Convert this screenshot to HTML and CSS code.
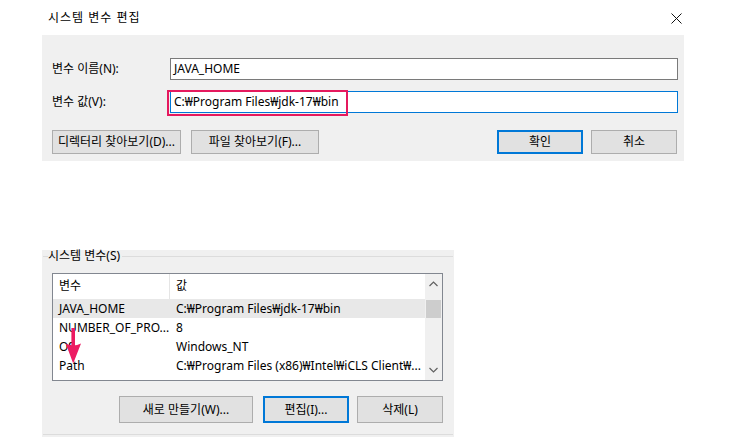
FILE: index.html
```html
<!DOCTYPE html>
<html lang="ko">
<head>
<meta charset="utf-8">
<title>시스템 변수 편집</title>
<link rel="stylesheet" href="styles.css">
</head>
<body>
<header class="titlebar">
  <span class="title">시스템 변수 편집</span>
  <svg class="close" width="11" height="11" viewBox="0 0 11 11"><path d="M0.5 0.5 L10.5 10.5 M10.5 0.5 L0.5 10.5" stroke="#111" stroke-width="1" fill="none"/></svg>
</header>

<section class="edit-panel">
  <div class="field-row">
    <label class="field-label">변수 이름(N):</label>
    <div class="input">JAVA_HOME</div>
  </div>
  <div class="field-row second">
    <label class="field-label">변수 값(V):</label>
    <div class="input focused">C:₩Program Files₩jdk-17₩bin<span class="highlight"></span></div>
  </div>
  <div class="button-row">
    <button class="btn w-dir">디렉터리 찾아보기(D)...</button>
    <button class="btn w-file">파일 찾아보기(F)...</button>
    <button class="btn w-small default push-right">확인</button>
    <button class="btn w-small">취소</button>
  </div>
</section>

<section class="var-panel">
  <div class="groupbox">
    <div class="legend"><span class="legend-text">시스템 변수(S)</span></div>
    <div class="listbox">
      <div class="list-content">
        <div class="list-header">
          <div class="col-name">변수</div>
          <div class="col-value header-value">값</div>
        </div>
        <div class="list-row selected"><div class="col-name">JAVA_HOME</div><div class="col-value">C:₩Program Files₩jdk-17₩bin</div></div>
        <div class="list-row"><div class="col-name">NUMBER_OF_PRO...</div><div class="col-value">8</div></div>
        <div class="list-row"><div class="col-name">OS</div><div class="col-value">Windows_NT</div></div>
        <div class="list-row"><div class="col-name">Path</div><div class="col-value">C:₩Program Files (x86)₩Intel₩iCLS Client₩...</div></div>
      </div>
      <div class="scrollbar">
        <svg class="chev" width="9" height="6" viewBox="0 0 9 6"><path d="M0.5 5 L4.5 1 L8.5 5" stroke="#606060" stroke-width="1.2" fill="none"/></svg>
        <div class="track"><div class="thumb"></div></div>
        <svg class="chev" width="9" height="6" viewBox="0 0 9 6"><path d="M0.5 1 L4.5 5 L8.5 1" stroke="#606060" stroke-width="1.2" fill="none"/></svg>
      </div>
    </div>
    <div class="list-buttons">
      <button class="btn big w-new">새로 만들기(W)...</button>
      <button class="btn big w-small default">편집(I)...</button>
      <button class="btn big w-small">삭제(L)</button>
    </div>
  </div>
  <svg class="pointer-arrow" width="60" height="120" viewBox="0 0 60 120">
    <rect x="29.4" y="78" width="3.6" height="22" fill="#ec1b63"/>
    <path d="M31.2 113.5 L23.8 93.5 Q31.2 97.5 39 93.5 Z" fill="#ec1b63"/>
  </svg>
</section>
</body>
</html>
```

FILE: styles.css
```css
* { box-sizing: border-box; }

body {
  margin: 0;
  background: #ffffff;
  font-family: "Noto Sans", "Noto Sans CJK KR", sans-serif;
  font-size: 12px;
  color: #000;
}

.titlebar {
  height: 35px;
  display: flex;
  align-items: center;
  padding: 0 47px 0 48px;
}

.title {
  line-height: 16px;
  margin-top: 1px;
  letter-spacing: 1px;
}

.close {
  margin-left: auto;
  margin-top: 1px;
}

.edit-panel {
  margin-left: 42px;
  width: 642px;
  height: 126px;
  background: #f0f0f0;
  padding: 23px 6px 0 10px;
}

.field-row {
  display: flex;
  align-items: center;
  height: 22px;
}

.field-row.second { margin-top: 11px; }

.field-label {
  width: 118px;
  line-height: 16px;
}

.input {
  position: relative;
  width: 508px;
  height: 22px;
  border: 1px solid #7a7a7a;
  background: #fff;
  padding: 0 3px;
  line-height: 20px;
  white-space: nowrap;
}

.input.focused { border-color: #0078d7; }

.highlight {
  position: absolute;
  left: -4px;
  top: -2px;
  width: 181px;
  height: 26px;
  border: 2px solid #e5195e;
}

.button-row {
  display: flex;
  margin-top: 17px;
  padding-right: 1px;
}

.btn {
  font: inherit;
  color: #000;
  height: 24px;
  background: #e1e1e1;
  border: 1px solid #adadad;
  padding: 0;
  line-height: 20px;
  white-space: nowrap;
}

.btn.default { border: 2px solid #0078d7; }

.w-dir { width: 129px; }
.w-file { width: 128px; margin-left: 10px; }
.w-small { width: 86px; }
.w-small + .w-small { margin-left: 8px; }
.push-right { margin-left: auto; }

.var-panel {
  position: relative;
  margin-top: 89px;
  margin-left: 42px;
  width: 412px;
  height: 187px;
  background: #f0f0f0;
  padding: 0 1px 2px 1px;
}

.groupbox {
  height: 185px;
  border-bottom: 1px solid #dcdcdc;
  padding: 0 10px 0 9px;
}

.legend {
  display: flex;
  align-items: center;
  height: 12px;
  margin: 0 -10px 0 -9px;
}

.legend::before {
  content: "";
  width: 5px;
  border-top: 1px solid #dcdcdc;
}

.legend::after {
  content: "";
  flex: 1;
  border-top: 1px solid #dcdcdc;
}

.legend-text {
  line-height: 12px;
  padding: 0 2px 0 0;
}

.listbox {
  display: flex;
  margin-top: 11px;
  width: 391px;
  height: 108px;
  border: 1px solid #828790;
  background: #fff;
}

.list-content {
  flex: 1;
  min-width: 0;
}

.list-header,
.list-row {
  display: flex;
  white-space: nowrap;
}

.list-header {
  height: 25px;
  line-height: 24px;
}

.list-row {
  height: 19px;
  line-height: 19px;
}

.list-row.selected { background: #e8e8e8; }

.col-name {
  width: 116px;
  padding-left: 6px;
  overflow: hidden;
}

.col-value {
  flex: 1;
  padding-left: 7px;
  overflow: hidden;
}

.header-value {
  border-left: 1px solid #e5e5e5;
  padding-left: 6px;
}

.scrollbar {
  width: 17px;
  background: #f0f0f0;
  display: flex;
  flex-direction: column;
  align-items: center;
}

.chev { margin: 7px 0 6px; flex: none; }
.scrollbar .chev:last-child { margin: 6px 0 7px; }

.track {
  flex: 1;
  width: 100%;
  padding: 7px 1px 0;
}

.thumb {
  height: 18px;
  background: #cdcdcd;
}

.list-buttons {
  display: flex;
  justify-content: flex-end;
  margin-top: 15px;
  width: 391px;
}

.btn.big { height: 27px; }
.w-new { width: 134px; margin-right: 10px; }

.pointer-arrow {
  position: absolute;
  left: 0;
  top: 0;
}
```
